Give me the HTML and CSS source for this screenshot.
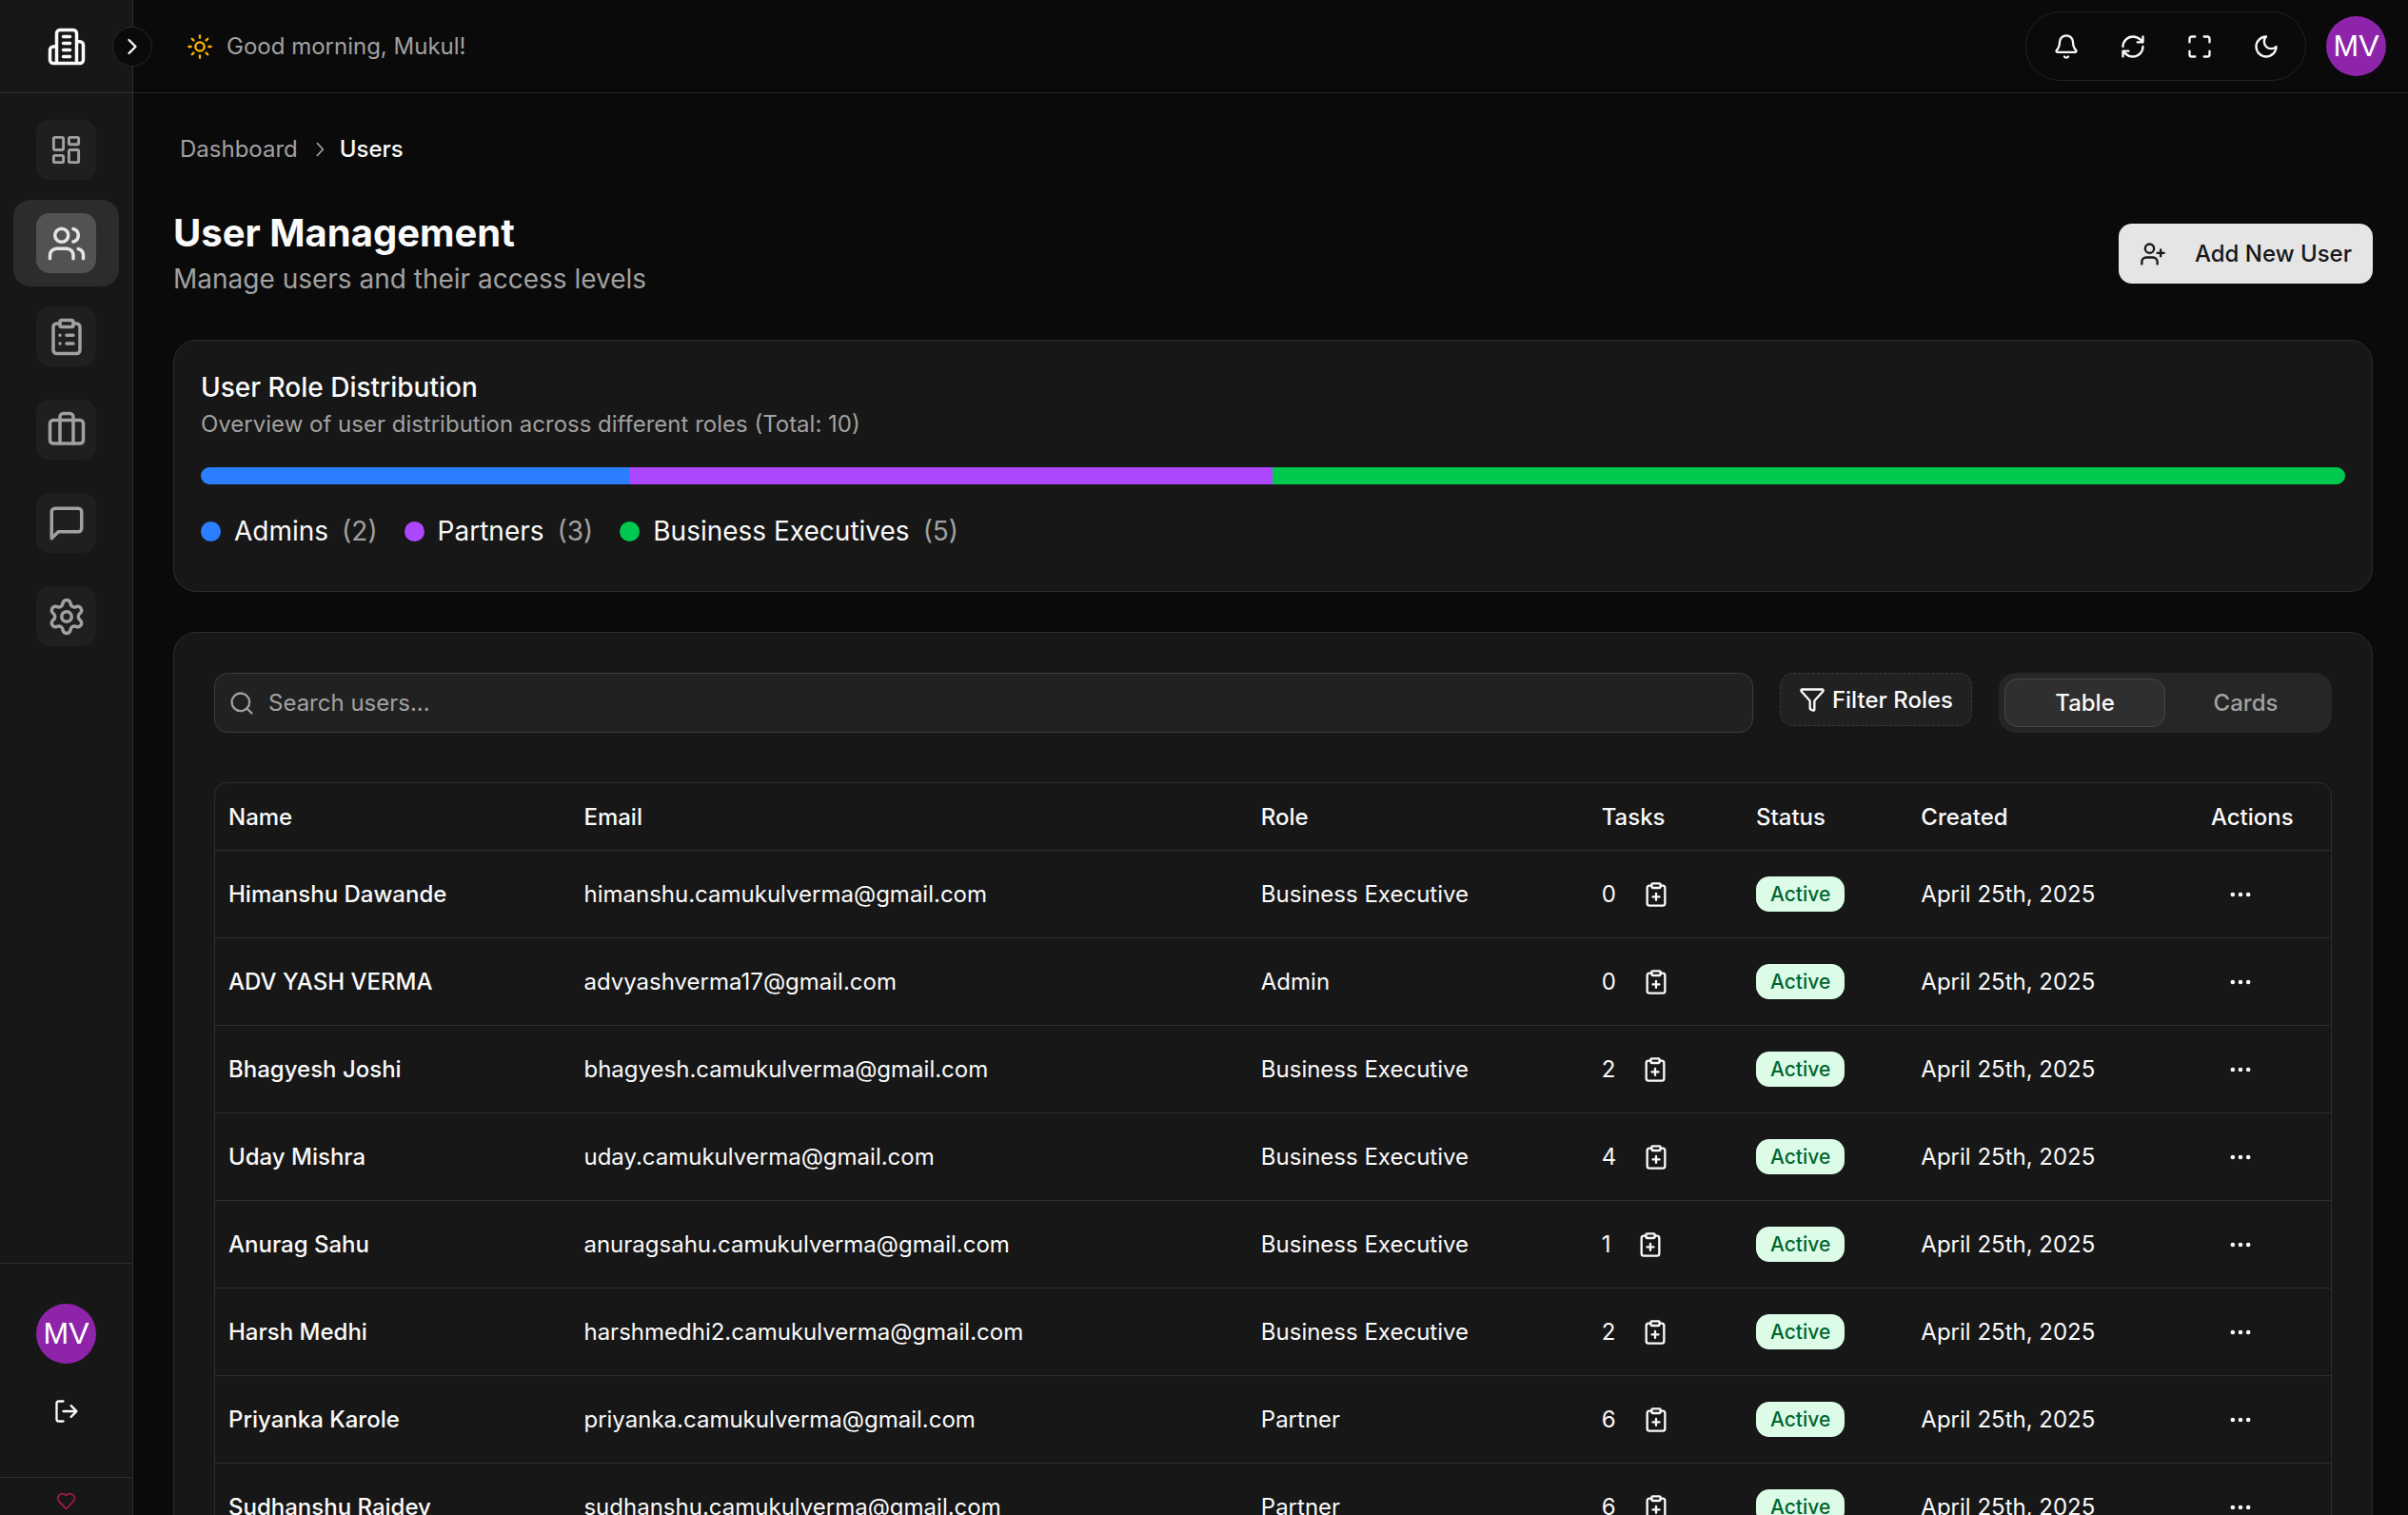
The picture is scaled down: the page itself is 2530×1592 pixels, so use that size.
FILE: index.html
```html
<!DOCTYPE html>
<html lang="en">
<head>
<meta charset="utf-8">
<meta name="viewport" content="width=device-width, initial-scale=1">
<title>User Management</title>
<link rel="stylesheet" href="styles.css">
</head>
<body>
<svg class="sprite" aria-hidden="true">
  <symbol id="i-clip-plus" viewBox="0 0 24 24"><rect width="8" height="4" x="8" y="2" rx="1"/><path d="M16 4h2a2 2 0 0 1 2 2v14a2 2 0 0 1-2 2H6a2 2 0 0 1-2-2V6a2 2 0 0 1 2-2h2M9 14h6M12 17v-6"/></symbol>
  <symbol id="i-dots" viewBox="0 0 24 24"><circle cx="12" cy="12" r="1"/><circle cx="19" cy="12" r="1"/><circle cx="5" cy="12" r="1"/></symbol>
</svg>

<aside class="sidebar">
  <div class="brand">
    <svg class="icon icon-lg" viewBox="0 0 24 24"><path d="M6 22V4a2 2 0 0 1 2-2h8a2 2 0 0 1 2 2v18ZM6 12H4a2 2 0 0 0-2 2v6a2 2 0 0 0 2 2h2M18 9h2a2 2 0 0 1 2 2v9a2 2 0 0 1-2 2h-2M10 6h4M10 10h4M10 14h4M10 18h4"/></svg>
    <button class="toggle" type="button" aria-label="Expand sidebar"><svg class="icon" viewBox="0 0 24 24"><path d="m9 18 6-6-6-6"/></svg></button>
  </div>
  <nav class="nav" aria-label="Main">
    <a class="nav-item" href="#" aria-label="Dashboard"><span class="tile"><svg class="icon icon-md" viewBox="0 0 24 24"><rect width="7" height="9" x="3" y="3" rx="1"/><rect width="7" height="5" x="14" y="3" rx="1"/><rect width="7" height="9" x="14" y="12" rx="1"/><rect width="7" height="5" x="3" y="16" rx="1"/></svg></span></a>
    <a class="nav-item active" href="#" aria-label="Users" aria-current="page"><span class="tile"><svg class="icon icon-lg" viewBox="0 0 24 24"><path d="M16 21v-2a4 4 0 0 0-4-4H6a4 4 0 0 0-4 4v2"/><circle cx="9" cy="7" r="4"/><path d="M22 21v-2a4 4 0 0 0-3-3.87M16 3.13a4 4 0 0 1 0 7.75"/></svg></span></a>
    <a class="nav-item" href="#" aria-label="Tasks"><span class="tile"><svg class="icon icon-lg" viewBox="0 0 24 24"><rect width="8" height="4" x="8" y="2" rx="1"/><path d="M16 4h2a2 2 0 0 1 2 2v14a2 2 0 0 1-2 2H6a2 2 0 0 1-2-2V6a2 2 0 0 1 2-2h2M12 11h4M12 16h4M8 11h.01M8 16h.01"/></svg></span></a>
    <a class="nav-item" href="#" aria-label="Clients"><span class="tile"><svg class="icon icon-lg" viewBox="0 0 24 24"><path d="M16 20V4a2 2 0 0 0-2-2h-4a2 2 0 0 0-2 2v16"/><rect width="20" height="14" x="2" y="6" rx="2"/></svg></span></a>
    <a class="nav-item" href="#" aria-label="Messages"><span class="tile"><svg class="icon icon-lg" viewBox="0 0 24 24"><path d="M21 15a2 2 0 0 1-2 2H7l-4 4V5a2 2 0 0 1 2-2h14a2 2 0 0 1 2 2z"/></svg></span></a>
    <a class="nav-item" href="#" aria-label="Settings"><span class="tile"><svg class="icon icon-lg" viewBox="0 0 24 24"><path d="M9.671 4.136a2.34 2.34 0 0 1 4.659 0 2.34 2.34 0 0 0 3.319 1.915 2.34 2.34 0 0 1 2.33 4.033 2.34 2.34 0 0 0 0 3.831 2.34 2.34 0 0 1-2.33 4.033 2.34 2.34 0 0 0-3.319 1.915 2.34 2.34 0 0 1-4.659 0 2.34 2.34 0 0 0-3.32-1.915 2.34 2.34 0 0 1-2.33-4.033 2.34 2.34 0 0 0 0-3.831A2.34 2.34 0 0 1 6.35 6.051a2.34 2.34 0 0 0 3.319-1.915"/><circle cx="12" cy="12" r="3"/></svg></span></a>
  </nav>
  <div class="account">
    <span class="avatar">MV</span>
    <button class="icon-button" type="button" aria-label="Log out"><svg class="icon" viewBox="0 0 24 24"><path d="M9 21H5a2 2 0 0 1-2-2V5a2 2 0 0 1 2-2h4M16 17l5-5-5-5M21 12H9"/></svg></button>
  </div>
  <div class="credit"><svg class="icon icon-sm" viewBox="0 0 24 24"><path d="M19 14c1.49-1.46 3-3.21 3-5.5A5.5 5.5 0 0 0 16.5 3c-1.76 0-3 .5-4.5 2-1.5-1.5-2.74-2-4.5-2A5.5 5.5 0 0 0 2 8.5c0 2.3 1.5 4.05 3 5.5l7 7Z"/></svg></div>
</aside>

<div class="page">
  <header class="topbar">
    <p class="greeting"><svg class="icon sun" viewBox="0 0 24 24"><circle cx="12" cy="12" r="4"/><path d="M12 2v2M12 20v2M4.93 4.93l1.41 1.41M17.66 17.66l1.41 1.41M2 12h2M20 12h2M6.34 17.66l-1.41 1.41M19.07 4.93l-1.41 1.41"/></svg>Good morning, Mukul!</p>
    <div class="top-actions">
      <div class="tools">
        <button class="icon-button" type="button" aria-label="Notifications"><svg class="icon" viewBox="0 0 24 24"><path d="M10.268 21a2 2 0 0 0 3.464 0M3.262 15.326A1 1 0 0 0 4 17h16a1 1 0 0 0 .74-1.673C19.41 13.956 18 12.499 18 8A6 6 0 0 0 6 8c0 4.499-1.411 5.956-2.738 7.326"/></svg></button>
        <button class="icon-button" type="button" aria-label="Refresh"><svg class="icon" viewBox="0 0 24 24"><path d="M3 12a9 9 0 0 1 9-9 9.75 9.75 0 0 1 6.74 2.74L21 8M21 3v5h-5M21 12a9 9 0 0 1-9 9 9.75 9.75 0 0 1-6.74-2.74L3 16M8 16H3v5"/></svg></button>
        <button class="icon-button" type="button" aria-label="Full screen"><svg class="icon" viewBox="0 0 24 24"><path d="M8 3H5a2 2 0 0 0-2 2v3M21 8V5a2 2 0 0 0-2-2h-3M3 16v3a2 2 0 0 0 2 2h3M16 21h3a2 2 0 0 0 2-2v-3"/></svg></button>
        <button class="icon-button" type="button" aria-label="Theme"><svg class="icon" viewBox="0 0 24 24"><path d="M12 3a6 6 0 0 0 9 9 9 9 0 1 1-9-9Z"/></svg></button>
      </div>
      <span class="avatar">MV</span>
    </div>
  </header>

  <main class="content">
    <nav class="breadcrumb" aria-label="Breadcrumb">
      <a href="#">Dashboard</a>
      <svg class="crumb-sep" viewBox="0 0 15 15"><path d="M6.158 3.135a.5.5 0 0 1 .707.023l3.75 4a.5.5 0 0 1 0 .684l-3.75 4a.5.5 0 1 1-.73-.684L9.565 7.5 6.135 3.842a.5.5 0 0 1 .023-.707Z"/></svg>
      <span aria-current="page">Users</span>
    </nav>

    <div class="heading">
      <div>
        <h1>User Management</h1>
        <p class="subtitle">Manage users and their access levels</p>
      </div>
      <button class="primary" type="button"><svg class="icon" viewBox="0 0 24 24"><path d="M16 21v-2a4 4 0 0 0-4-4H6a4 4 0 0 0-4 4v2"/><circle cx="9" cy="7" r="4"/><path d="M19 8v6M22 11h-6"/></svg>Add New User</button>
    </div>

    <section class="card roles">
      <h2>User Role Distribution</h2>
      <p class="muted">Overview of user distribution across different roles (Total: 10)</p>
      <div class="bar">
        <span class="blue" style="width:20%"></span><span class="purple" style="width:30%"></span><span class="green" style="width:50%"></span>
      </div>
      <ul class="legend">
        <li><span class="dot blue"></span>Admins <span class="count">(2)</span></li>
        <li><span class="dot purple"></span>Partners <span class="count">(3)</span></li>
        <li><span class="dot green"></span>Business Executives <span class="count">(5)</span></li>
      </ul>
    </section>

    <section class="card users">
      <div class="toolbar">
        <label class="search">
          <svg class="icon" viewBox="0 0 24 24"><circle cx="11" cy="11" r="8"/><path d="m21 21-4.3-4.3"/></svg>
          <input type="search" placeholder="Search users..." aria-label="Search users">
        </label>
        <button class="filter" type="button"><svg class="icon" viewBox="0 0 24 24"><path d="M10 20a1 1 0 0 0 .553.895l2 1A1 1 0 0 0 14 21v-7a2 2 0 0 1 .517-1.341L21.74 4.67A1 1 0 0 0 21 3H3a1 1 0 0 0-.742 1.67l7.225 7.989A2 2 0 0 1 10 14z"/></svg>Filter Roles</button>
        <div class="tabs" role="tablist">
          <button type="button" role="tab" aria-selected="true">Table</button>
          <button type="button" role="tab" aria-selected="false">Cards</button>
        </div>
      </div>

      <div class="table-wrap">
        <table>
          <colgroup><col class="c-name"><col class="c-email"><col class="c-role"><col class="c-tasks"><col class="c-status"><col class="c-created"><col></colgroup>
          <thead><tr><th>Name</th><th>Email</th><th>Role</th><th>Tasks</th><th>Status</th><th>Created</th><th>Actions</th></tr></thead>
          <tbody>
            <tr><th scope="row">Himanshu Dawande</th><td>himanshu.camukulverma@gmail.com</td><td>Business Executive</td><td><span class="tasks">0<button type="button" aria-label="Assign task"><svg class="icon"><use href="#i-clip-plus"/></svg></button></span></td><td><span class="badge">Active</span></td><td>April 25th, 2025</td><td><button class="icon-button" type="button" aria-label="More"><svg class="icon"><use href="#i-dots"/></svg></button></td></tr>
            <tr><th scope="row">ADV YASH VERMA</th><td>advyashverma17@gmail.com</td><td>Admin</td><td><span class="tasks">0<button type="button" aria-label="Assign task"><svg class="icon"><use href="#i-clip-plus"/></svg></button></span></td><td><span class="badge">Active</span></td><td>April 25th, 2025</td><td><button class="icon-button" type="button" aria-label="More"><svg class="icon"><use href="#i-dots"/></svg></button></td></tr>
            <tr><th scope="row">Bhagyesh Joshi</th><td>bhagyesh.camukulverma@gmail.com</td><td>Business Executive</td><td><span class="tasks">2<button type="button" aria-label="Assign task"><svg class="icon"><use href="#i-clip-plus"/></svg></button></span></td><td><span class="badge">Active</span></td><td>April 25th, 2025</td><td><button class="icon-button" type="button" aria-label="More"><svg class="icon"><use href="#i-dots"/></svg></button></td></tr>
            <tr><th scope="row">Uday Mishra</th><td>uday.camukulverma@gmail.com</td><td>Business Executive</td><td><span class="tasks">4<button type="button" aria-label="Assign task"><svg class="icon"><use href="#i-clip-plus"/></svg></button></span></td><td><span class="badge">Active</span></td><td>April 25th, 2025</td><td><button class="icon-button" type="button" aria-label="More"><svg class="icon"><use href="#i-dots"/></svg></button></td></tr>
            <tr><th scope="row">Anurag Sahu</th><td>anuragsahu.camukulverma@gmail.com</td><td>Business Executive</td><td><span class="tasks">1<button type="button" aria-label="Assign task"><svg class="icon"><use href="#i-clip-plus"/></svg></button></span></td><td><span class="badge">Active</span></td><td>April 25th, 2025</td><td><button class="icon-button" type="button" aria-label="More"><svg class="icon"><use href="#i-dots"/></svg></button></td></tr>
            <tr><th scope="row">Harsh Medhi</th><td>harshmedhi2.camukulverma@gmail.com</td><td>Business Executive</td><td><span class="tasks">2<button type="button" aria-label="Assign task"><svg class="icon"><use href="#i-clip-plus"/></svg></button></span></td><td><span class="badge">Active</span></td><td>April 25th, 2025</td><td><button class="icon-button" type="button" aria-label="More"><svg class="icon"><use href="#i-dots"/></svg></button></td></tr>
            <tr><th scope="row">Priyanka Karole</th><td>priyanka.camukulverma@gmail.com</td><td>Partner</td><td><span class="tasks">6<button type="button" aria-label="Assign task"><svg class="icon"><use href="#i-clip-plus"/></svg></button></span></td><td><span class="badge">Active</span></td><td>April 25th, 2025</td><td><button class="icon-button" type="button" aria-label="More"><svg class="icon"><use href="#i-dots"/></svg></button></td></tr>
            <tr><th scope="row">Sudhanshu Rajdev</th><td>sudhanshu.camukulverma@gmail.com</td><td>Partner</td><td><span class="tasks">6<button type="button" aria-label="Assign task"><svg class="icon"><use href="#i-clip-plus"/></svg></button></span></td><td><span class="badge">Active</span></td><td>April 25th, 2025</td><td><button class="icon-button" type="button" aria-label="More"><svg class="icon"><use href="#i-dots"/></svg></button></td></tr>
          </tbody>
        </table>
      </div>
    </section>
  </main>
</div>
</body>
</html>
```
FILE: styles.css
```css
:root {
  --bg: #0a0a0a;
  --panel: #171717;
  --line: #2e2e2e;
  --line-dark: #222;
  --text: #fafafa;
  --muted: #a1a1a1;
}

* { box-sizing: border-box; }

body {
  margin: 0;
  height: 100vh;
  display: flex;
  overflow: hidden;
  background: var(--bg);
  color: var(--text);
  font: 400 24px/35px Inter, sans-serif;
}

h1, h2, p, ul { margin: 0; padding: 0; }
a { color: inherit; text-decoration: none; }

button {
  padding: 0;
  border: 0;
  background: none;
  color: inherit;
  font: inherit;
  cursor: pointer;
}

.sprite { position: absolute; width: 0; height: 0; }

.icon {
  width: 28px;
  height: 28px;
  flex: none;
  display: block;
  fill: none;
  stroke: currentColor;
  stroke-width: 2;
  stroke-linecap: round;
  stroke-linejoin: round;
}
.icon-sm { width: 21px; height: 21px; }
.icon-md { width: 35px; height: 35px; }
.icon-lg { width: 42px; height: 42px; }

.icon-button {
  width: 63px;
  height: 63px;
  display: flex;
  align-items: center;
  justify-content: center;
}

.avatar {
  width: 63px;
  height: 63px;
  flex: none;
  display: flex;
  align-items: center;
  justify-content: center;
  border-radius: 50%;
  background: #8e24aa;
  color: #fff;
  font: 400 32px/35px "Liberation Sans", Arial, sans-serif;
}

/* Sidebar */
.sidebar {
  width: 140px;
  flex: none;
  display: flex;
  flex-direction: column;
  background: var(--panel);
  border-right: 1px solid var(--line);
}

.brand {
  position: relative;
  height: 98px;
  flex: none;
  display: flex;
  align-items: center;
  justify-content: center;
  border-bottom: 1px solid var(--line);
}

.toggle {
  position: absolute;
  right: -21px;
  width: 42px;
  height: 42px;
  display: flex;
  align-items: center;
  justify-content: center;
  border: 1px solid #262626;
  border-radius: 50%;
  background: var(--bg);
}

.nav {
  flex: 1;
  display: flex;
  flex-direction: column;
  gap: 7px;
  padding: 14px;
}

.nav-item {
  display: flex;
  justify-content: center;
  padding: 14px;
  border-radius: 18px;
  color: var(--muted);
}

.tile {
  width: 63px;
  height: 63px;
  display: flex;
  align-items: center;
  justify-content: center;
  border-radius: 14px;
  background: #1f1f1f;
}

.nav-item.active { background: #2c2c2c; color: #e5e5e5; }
.nav-item.active .tile { background: #525252; }

.account {
  display: flex;
  flex-direction: column;
  align-items: center;
  gap: 18px;
  padding: 42px 0 38px;
  border-top: 1px solid var(--line);
}

.credit {
  display: flex;
  justify-content: center;
  padding: 14px 0 4px;
  border-top: 1px solid var(--line);
  color: #a51c41;
}

/* Top bar */
.page {
  flex: 1;
  min-width: 0;
  display: flex;
  flex-direction: column;
}

.topbar {
  height: 98px;
  flex: none;
  display: flex;
  align-items: center;
  justify-content: space-between;
  padding: 0 23px 0 56px;
  border-bottom: 1px solid var(--line-dark);
}

.greeting {
  display: flex;
  align-items: center;
  gap: 14px;
  color: var(--muted);
}
.sun { color: #fdb800; }

.top-actions { display: flex; align-items: center; gap: 21px; }

.tools {
  display: flex;
  gap: 7px;
  padding: 4px 10px;
  border: 1px solid var(--line-dark);
  border-radius: 36px;
}

/* Content */
.content {
  flex: 1;
  min-height: 0;
  overflow: hidden;
  padding: 38px 37px 0 42px;
}

.breadcrumb {
  display: flex;
  align-items: center;
  gap: 10px;
  padding-left: 7px;
  line-height: 42px;
  font-weight: 500;
}
.breadcrumb a { color: var(--muted); font-weight: 400; }
.crumb-sep { width: 24px; height: 24px; fill: var(--muted); }

.heading {
  display: flex;
  align-items: center;
  justify-content: space-between;
  margin: 42px 0 44px;
}
h1 { font-size: 40px; line-height: 49px; font-weight: 700; }
.subtitle { margin-top: 4px; font-size: 28px; line-height: 40px; color: var(--muted); }

.primary {
  height: 63px;
  display: flex;
  align-items: center;
  gap: 30px;
  padding: 0 22px;
  border-radius: 14px;
  background: #e5e5e5;
  color: #171717;
  font-weight: 500;
}

.card {
  border: 1px solid var(--line);
  border-radius: 24px;
  background: var(--panel);
}

.roles { padding: 28px 28px 42px; }
h2 { font-size: 28px; line-height: 42px; font-weight: 500; }
.muted { color: var(--muted); }

.bar {
  height: 18px;
  display: flex;
  margin: 28px 0;
  overflow: hidden;
  border-radius: 9px;
}
.blue { background: #2b7fff; }
.purple { background: #ad46ff; }
.green { background: #00c950; }

.legend {
  display: flex;
  flex-wrap: wrap;
  gap: 28px;
  list-style: none;
  font-size: 28px;
  line-height: 42px;
}
.legend li { display: flex; align-items: center; gap: 14px; }
.dot { width: 21px; height: 21px; border-radius: 50%; }
.count { color: var(--muted); }

.users { margin-top: 42px; padding: 42px; }

.toolbar {
  display: flex;
  align-items: flex-start;
  gap: 28px;
  margin-bottom: 52px;
}

.search {
  flex: 1;
  height: 63px;
  display: flex;
  align-items: center;
  gap: 14px;
  padding: 0 14px;
  border: 1px solid #3c3c3c;
  border-radius: 14px;
  background: #212121;
  color: var(--muted);
}
.search input {
  flex: 1;
  min-width: 0;
  padding: 0;
  border: 0;
  outline: 0;
  background: none;
  color: var(--text);
  font: inherit;
}
.search input::placeholder { color: var(--muted); opacity: 1; }

.filter {
  height: 56px;
  display: flex;
  align-items: center;
  gap: 7px;
  padding: 0 19px;
  border: 1px dashed #3c3c3c;
  border-radius: 14px;
  background: #212121;
  font-weight: 500;
}

.tabs {
  width: 350px;
  height: 63px;
  display: grid;
  grid-template-columns: 1fr 1fr;
  padding: 6px;
  border-radius: 18px;
  background: #262626;
}
.tabs button {
  border: 1px solid transparent;
  border-radius: 14px;
  color: var(--muted);
  font-weight: 500;
}
.tabs [aria-selected="true"] {
  border-color: #484848;
  background: #2f2f2f;
  color: var(--text);
}

.table-wrap {
  overflow: hidden;
  border: 1px solid var(--line);
  border-radius: 14px;
}
table { width: 100%; table-layout: fixed; border-collapse: separate; border-spacing: 0; }
.c-name { width: 16.8%; }
.c-email { width: 32%; }
.c-role { width: 16.1%; }
.c-tasks { width: 7.3%; }
.c-status { width: 7.8%; }
.c-created { width: 13.7%; }

th, td {
  height: 92px;
  padding: 0 14px;
  border-bottom: 1px solid var(--line);
  text-align: left;
  white-space: nowrap;
}
th { font-weight: 500; }
thead th { height: 71px; }

.tasks { display: flex; align-items: center; gap: 28px; }

.badge {
  display: inline-block;
  padding: 0 15px;
  border-radius: 14px;
  background: #dcfce7;
  color: #016630;
  font-size: 21px;
  line-height: 37px;
  font-weight: 500;
  vertical-align: middle;
}
```
